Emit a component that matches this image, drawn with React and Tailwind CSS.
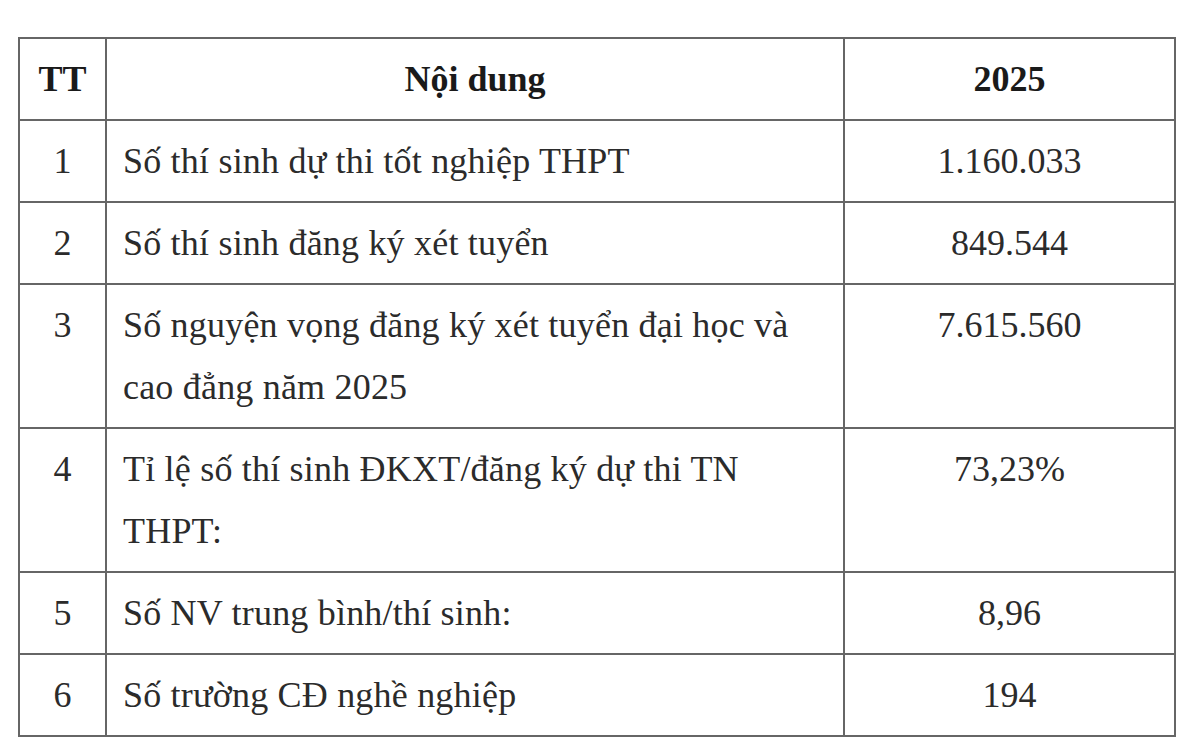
import React from 'react';

const rows = [
    { tt: '1', content: 'Số thí sinh dự thi tốt nghiệp THPT', value: '1.160.033' },
    { tt: '2', content: 'Số thí sinh đăng ký xét tuyển', value: '849.544' },
    { tt: '3', content: 'Số nguyện vọng đăng ký xét tuyển đại học và cao đẳng năm 2025', value: '7.615.560' },
    { tt: '4', content: 'Tỉ lệ số thí sinh ĐKXT/đăng ký dự thi TN THPT:', value: '73,23%' },
    { tt: '5', content: 'Số NV trung bình/thí sinh:', value: '8,96' },
    { tt: '6', content: 'Số trường CĐ nghề nghiệp', value: '194' },
];

const App = () => {
    return (
        <div className="w-[1200px] h-[755px] bg-white overflow-hidden pt-[37px] pl-[18px] font-['Liberation_Serif','Times_New_Roman',serif] text-[#2b2b2b]">
            <table className="w-[1156px] border-collapse table-fixed text-[36px] leading-[62px]">
                <colgroup>
                    <col className="w-[87px]" />
                    <col className="w-[738px]" />
                    <col className="w-[331px]" />
                </colgroup>
                <thead>
                    <tr className="h-[82px]">
                        <th className="border-2 border-[#666666] font-bold text-center align-middle text-[#1a1a1a]">TT</th>
                        <th className="border-2 border-[#666666] font-bold text-center align-middle text-[#1a1a1a]">Nội dung</th>
                        <th className="border-2 border-[#666666] font-bold text-center align-middle text-[#1a1a1a]">2025</th>
                    </tr>
                </thead>
                <tbody>
                    {rows.map((row) => (
                        <tr key={row.tt}>
                            <td className="border-2 border-[#666666] text-center align-top py-[9px]">{row.tt}</td>
                            <td className="border-2 border-[#666666] align-top py-[9px] pl-[16px] pr-[30px] tracking-[0.2px]">{row.content}</td>
                            <td className="border-2 border-[#666666] text-center align-top py-[9px]">{row.value}</td>
                        </tr>
                    ))}
                </tbody>
            </table>
        </div>
    );
};

export default App;
